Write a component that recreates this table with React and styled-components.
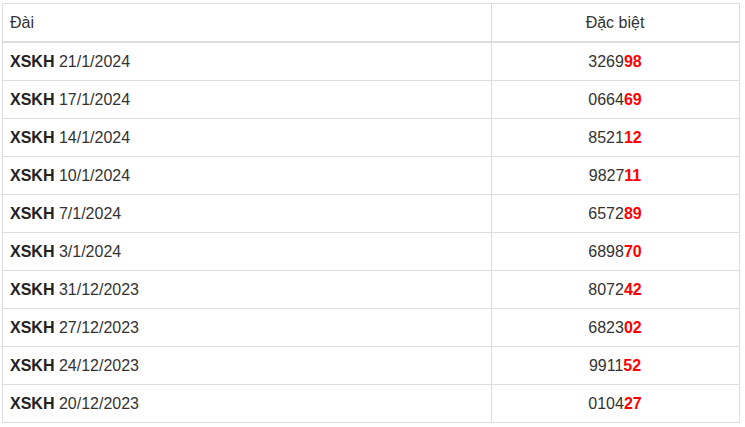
import styled, { createGlobalStyle } from 'styled-components';

const GlobalStyle = createGlobalStyle`
	body {
		margin: 0;
		background: #fff;
		font-family: 'Liberation Sans', Arial, sans-serif;
	}
`;

const RESULTS = [
	{ date: '21/1/2024', number: '326998' },
	{ date: '17/1/2024', number: '066469' },
	{ date: '14/1/2024', number: '852112' },
	{ date: '10/1/2024', number: '982711' },
	{ date: '7/1/2024', number: '657289' },
	{ date: '3/1/2024', number: '689870' },
	{ date: '31/12/2023', number: '807242' },
	{ date: '27/12/2023', number: '682302' },
	{ date: '24/12/2023', number: '991152' },
	{ date: '20/12/2023', number: '010427' }
];

const Page = styled.div`
	padding: 3px 5px 0 2px;
`;

const Table = styled.table`
	width: 738px;
	table-layout: fixed;
	border-collapse: collapse;
	border: 1px solid #ddd;
	color: #333;
	font-size: 16px;
`;

const HeadCell = styled.th`
	font-weight: normal;
	text-align: ${(props) => props.$align || 'left'};
	padding: 8px 8px 8px 7px;
	line-height: 21px;
	border: 1px solid #ddd;
	border-bottom: 2px solid #ddd;
	width: ${(props) => props.$width || 'auto'};
`;

const Cell = styled.td`
	text-align: ${(props) => props.$align || 'left'};
	padding: 8px 8px 8px 7px;
	line-height: 21px;
	border: 1px solid #ddd;
`;

const Station = styled.b`
	color: #222;
`;

const Tail = styled.b`
	color: #f00;
`;

function Row({ date, number }) {
	return (
		<tr>
			<Cell>
				<Station>XSKH</Station> {date}
			</Cell>
			<Cell $align="center">
				{number.slice(0, 4)}
				<Tail>{number.slice(4)}</Tail>
			</Cell>
		</tr>
	);
}

function App() {
	return (
		<Page>
			<GlobalStyle />
			<Table>
				<thead>
					<tr>
						<HeadCell $width="473px">Đài</HeadCell>
						<HeadCell $align="center">Đặc biệt</HeadCell>
					</tr>
				</thead>
				<tbody>
					{RESULTS.map((r) => (
						<Row key={r.date} date={r.date} number={r.number} />
					))}
				</tbody>
			</Table>
		</Page>
	);
}

export default App;
